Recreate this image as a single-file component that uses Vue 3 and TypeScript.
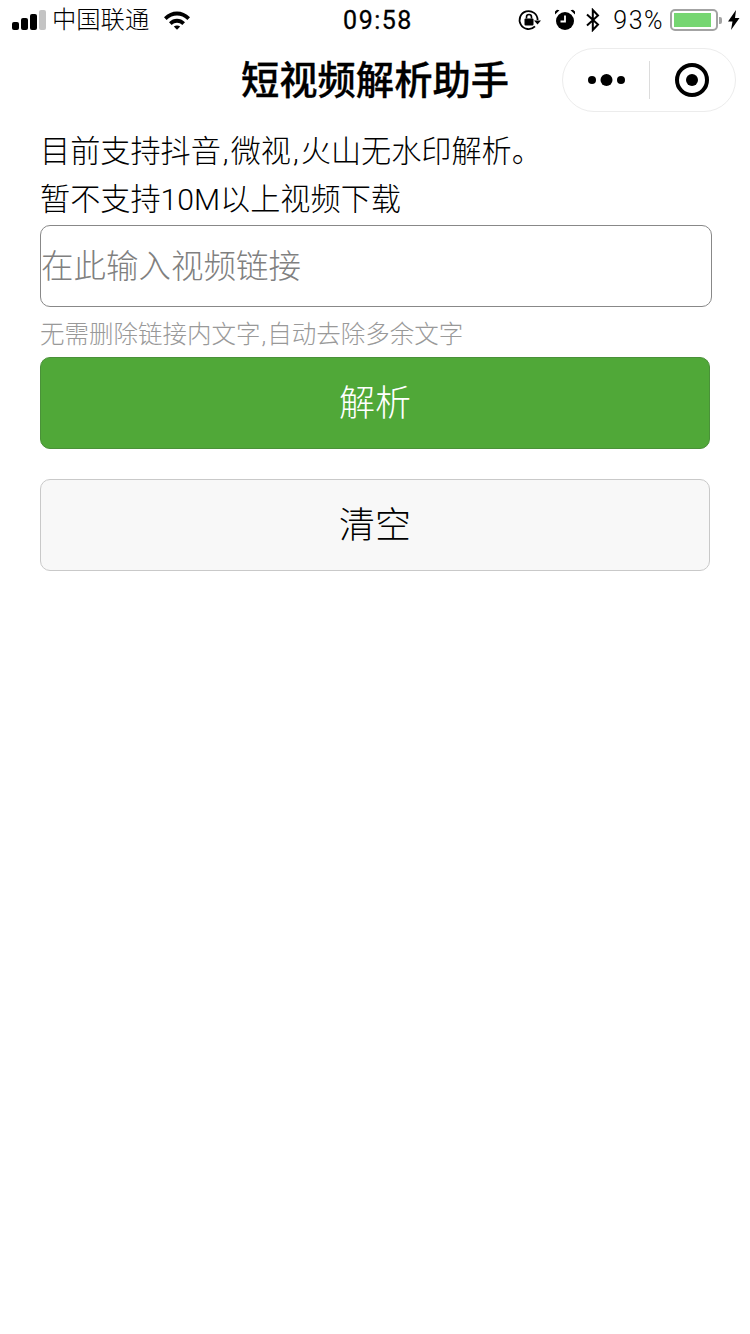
<template>
  <div class="page">
    <!-- 状态栏 -->
    <div class="status-bar">
      <div class="status-left">
        <div class="signal">
          <i class="s1"></i><i class="s2"></i><i class="s3"></i><i class="s4"></i>
        </div>
        <span class="carrier">中国联通</span>
        <svg class="wifi" width="28" height="20" viewBox="0 0 28 20">
          <path d="M1 7.2C8.6-.4 19.4-.4 27 7.2l-2.6 2.7C18.2 4 9.8 4 3.6 9.9z" fill="#000" />
          <path d="M6 12.2c4.800-4.600 11.200-4.600 16 0l-2.700 2.700c-3.200-2.900-7.400-2.900-10.600 0z" fill="#000" />
          <path d="M10.800 16.600c1.900-1.500 4.500-1.500 6.400 0L14 19.800z" fill="#000" />
        </svg>
      </div>
      <div class="time">09:58</div>
      <div class="status-right">
        <svg class="lock" width="24" height="24" viewBox="0 0 24 24">
          <path d="M20.600 12a9 9 0 1 0-2.600 6.400" fill="none" stroke="#000" stroke-width="1.800" />
          <path d="M17 12.500h7l-3.500 4z" fill="#000" />
          <rect x="7.500" y="10.500" width="9" height="7" rx="1" fill="#000" />
          <path d="M9.500 10.500V9a2.500 2.500 0 0 1 5 0v1.500" fill="none" stroke="#000" stroke-width="1.600" />
        </svg>
        <svg class="alarm" width="22" height="24" viewBox="0 0 22 24">
          <circle cx="11" cy="13" r="9" fill="#000" />
          <path d="M11 7.500V13.500H6.500" fill="none" stroke="#fff" stroke-width="1.800" />
          <path d="M1 6.500 5.500 2.200 3 1.800 1 3.600zM21 6.500 16.500 2.200 19 1.800 21 3.600z" fill="#000" />
        </svg>
        <svg class="bt" width="16" height="24" viewBox="0 0 16 24">
          <path d="M2 6.500 13 16.500 7.800 22V2L13 7.500 2 17.500" fill="none" stroke="#000" stroke-width="2" />
        </svg>
        <span class="percent">93%</span>
        <div class="battery">
          <div class="battery-body"><div class="battery-fill" :style="{ width: batteryLevel + '%' }"></div></div>
          <div class="battery-cap"></div>
        </div>
        <svg class="bolt" width="12" height="20" viewBox="0 0 12 20">
          <path d="M8 0 0 11.500h4.500L3 20l8.500-12H7z" fill="#000" />
        </svg>
      </div>
    </div>

    <!-- 导航栏 -->
    <div class="nav-bar">
      <h1 class="nav-title">短视频解析助手</h1>
      <div class="capsule">
        <div class="capsule-btn">
          <svg class="dots" width="40" height="16" viewBox="0 0 40 16">
            <circle cx="5" cy="8" r="4" fill="#000" />
            <circle cx="19.500" cy="8" r="6" fill="#000" />
            <circle cx="34" cy="8" r="4" fill="#000" />
          </svg>
        </div>
        <div class="capsule-line"></div>
        <div class="capsule-btn">
          <svg width="36" height="36" viewBox="0 0 36 36">
            <circle cx="18" cy="18" r="15" fill="none" stroke="#000" stroke-width="4" />
            <circle cx="18" cy="18" r="6" fill="#000" />
          </svg>
        </div>
      </div>
    </div>

    <!-- 内容 -->
    <div class="content">
      <p class="intro">目前支持抖音<span class="comma">,</span>微视<span class="comma">,</span>火山无水印解析。</p>
      <p class="intro">暂不支持10M以上视频下载</p>
      <div class="input-box">
        <input v-model="link" class="link-input" type="text" placeholder="在此输入视频链接" />
      </div>
      <p class="hint">无需删除链接内文字<span class="hint-comma">,</span>自动去除多余文字</p>
      <button class="btn btn-primary">解析</button>
      <button class="btn btn-default" @click="link = ''">清空</button>
    </div>
  </div>
</template>

<script setup lang="ts">
import { ref } from 'vue'

const link = ref<string>('')
const batteryLevel = 93
</script>

<style>
html,
body {
  background: #fff;
}
</style>

<style scoped>
.page {
  width: 750px;
  height: 1334px;
  background: #fff;
  color: #000;
  overflow: hidden;
  font-family: Roboto, "Noto Sans CJK SC", sans-serif;
}

.status-bar {
  height: 40px;
  display: grid;
  grid-template-columns: 1fr auto 1fr;
  align-items: center;
  padding: 0 10px 0 12px;
}

.status-left,
.status-right {
  display: flex;
  align-items: center;
}

.status-right {
  justify-content: flex-end;
}

.signal {
  display: flex;
  align-items: flex-end;
  gap: 2px;
  height: 20px;
}

.signal i {
  display: block;
  width: 7px;
  border-radius: 2px;
  background: #000;
}

.signal .s1 { height: 8px; }
.signal .s2 { height: 12px; }
.signal .s3 { height: 16px; }
.signal .s4 { height: 20px; background: #c4c4c4; }

.carrier {
  margin-left: 6px;
  font-size: 24.300px;
  font-weight: 300;
  line-height: 40px;
}

.wifi {
  margin-left: 14px;
}

.time {
  margin-left: 4px;
  font-size: 25px;
  font-weight: 400;
  letter-spacing: 1.500px;
  -webkit-text-stroke: 0.300px #000;
}

.lock {
  margin-right: 13px;
}

.alarm {
  margin-right: 9px;
}

.bt {
  margin-right: 12px;
}

.percent {
  font-size: 25px;
  font-weight: 300;
  letter-spacing: 1.500px;
}

.battery {
  display: flex;
  align-items: center;
  margin-left: 6px;
}

.battery-body {
  width: 48px;
  height: 22px;
  padding: 2px;
  box-sizing: border-box;
  border: 2px solid #a3a3a3;
  border-radius: 5px;
}

.battery-fill {
  height: 100%;
  background: #76d672;
}

.battery-cap {
  width: 3px;
  height: 7px;
  margin-left: 1px;
  border-radius: 0 2px 2px 0;
  background: #a3a3a3;
}

.bolt {
  margin-left: 6px;
}

.nav-bar {
  position: relative;
  height: 80px;
  display: flex;
  align-items: center;
  justify-content: center;
}

.nav-title {
  margin: 2px 0 0;
  font-size: 38.300px;
  font-weight: 500;
  line-height: 78px;
  -webkit-text-stroke: 0.300px #000;
}

.capsule {
  position: absolute;
  top: 8px;
  right: 14px;
  width: 174px;
  height: 64px;
  box-sizing: border-box;
  display: flex;
  align-items: center;
  border: 1px solid #ececec;
  border-radius: 32px;
  background: #fff;
}

.capsule-btn {
  flex: 1;
  display: flex;
  align-items: center;
  justify-content: center;
}

.dots {
  margin-left: 3px;
}

.capsule-line {
  width: 1px;
  height: 38px;
  background: #dcdcdc;
}

.content {
  padding: 8px 40px 0;
}

.intro {
  margin: 0;
  font-size: 30.150px;
  font-weight: 300;
  line-height: 48px;
}

.comma {
  margin: 0 2px;
}

.input-box {
  width: 672px;
  height: 82px;
  margin-top: 1px;
  box-sizing: border-box;
  border: 1px solid #888;
  border-radius: 10px;
}

.link-input {
  display: block;
  width: 100%;
  height: 100%;
  padding: 2px 0 0;
  box-sizing: border-box;
  border: none;
  outline: none;
  background: transparent;
  font-family: inherit;
  font-size: 32.500px;
  font-weight: 300;
  color: #000;
}

.link-input::placeholder {
  color: #808080;
  opacity: 1;
}

.hint {
  margin: 11px 0 0;
  font-size: 24.500px;
  font-weight: 300;
  line-height: 34px;
  color: #999;
}

.hint-comma {
  margin: 0 1px;
}

.btn {
  display: block;
  width: 670px;
  height: 92px;
  padding: 0 0 6px;
  box-sizing: border-box;
  border-radius: 10px;
  font-family: inherit;
  font-size: 36px;
  font-weight: 300;
}

.btn-primary {
  margin-top: 5px;
  border: 1px solid #4a9139;
  background: #50a838;
  color: #fff;
}

.btn-default {
  margin-top: 30px;
  border: 1px solid #c9c9c9;
  background: #f8f8f8;
  color: #000;
}
</style>
